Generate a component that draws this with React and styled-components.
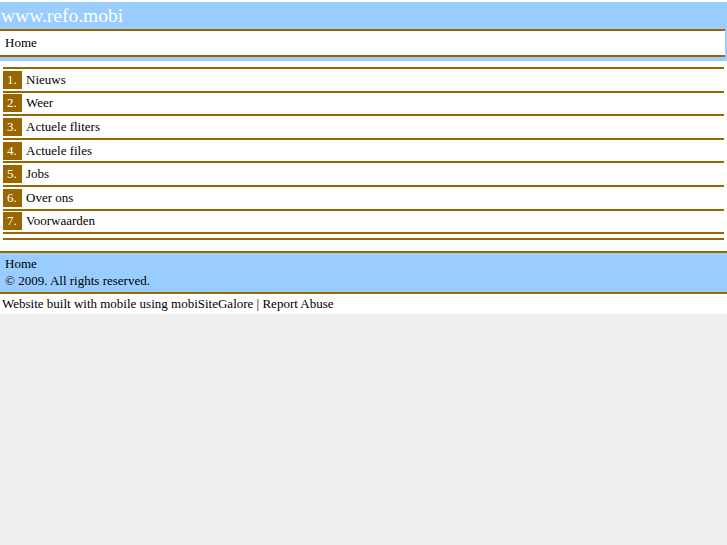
import React from "react";
import styled, { createGlobalStyle } from "styled-components";

const GlobalStyle = createGlobalStyle`
  html, body {
    margin: 0;
    padding: 0;
    background: #efefef;
    font-family: "Liberation Serif", "Times New Roman", serif;
    color: #000;
  }
`;

const brown = "#996600";
const sky = "#99ccff";

const menu = [
  "Nieuws",
  "Weer",
  "Actuele fliters",
  "Actuele files",
  "Jobs",
  "Over ons",
  "Voorwaarden",
];

export default function App() {
  return (
    <>
      <GlobalStyle />
      <Page>
        <Header>
          <Title>www.refo.mobi</Title>
          <Crumb>Home</Crumb>
        </Header>

        <Menu>
          {menu.map((label, i) => (
            <Row key={label}>
              <Num>{i + 1}.</Num>
              <Label>{label}</Label>
            </Row>
          ))}
        </Menu>
        <Rule />

        <Footer>
          <FootLine>Home</FootLine>
          <FootLine>© 2009. All rights reserved.</FootLine>
        </Footer>
        <Credit>Website built with mobile using mobiSiteGalore | Report Abuse</Credit>
      </Page>
    </>
  );
}

const Page = styled.div`
  background: #fff;
  padding-top: 2px;
`;

const Header = styled.header`
  background: ${sky};
  padding: 0 2px 4px 0;
`;

const Title = styled.div`
  color: #fff;
  font-size: 19.5px;
  line-height: 27px;
  padding-left: 1px;
`;

const Crumb = styled.div`
  background: #fff;
  border-top: 2px solid ${brown};
  border-bottom: 2px solid ${brown};
  font-size: 13px;
  line-height: 24px;
  padding-left: 5px;
`;

const Menu = styled.div`
  margin: 6px 3px 0;
  border-bottom: 2px solid ${brown};
`;

const Row = styled.div`
  display: flex;
  align-items: center;
  gap: 4px;
  border-top: 2px solid ${brown};
  height: 21.6px;
`;

const Num = styled.span`
  background: ${brown};
  color: #fff;
  width: 19px;
  height: 18px;
  font-size: 13px;
  line-height: 18px;
  padding-left: 4px;
  box-sizing: border-box;
`;

const Label = styled.span`
  font-size: 13px;
`;

const Rule = styled.div`
  margin: 4px 3px 0;
  border-top: 2px solid ${brown};
`;

const Footer = styled.footer`
  margin-top: 11px;
  background: ${sky};
  border-top: 2px solid ${brown};
  border-bottom: 2px solid ${brown};
  padding: 2px 5px 3px;
`;

const FootLine = styled.div`
  font-size: 13px;
  line-height: 17px;
`;

const Credit = styled.div`
  font-size: 13px;
  line-height: 20px;
  padding-left: 2px;
`;
